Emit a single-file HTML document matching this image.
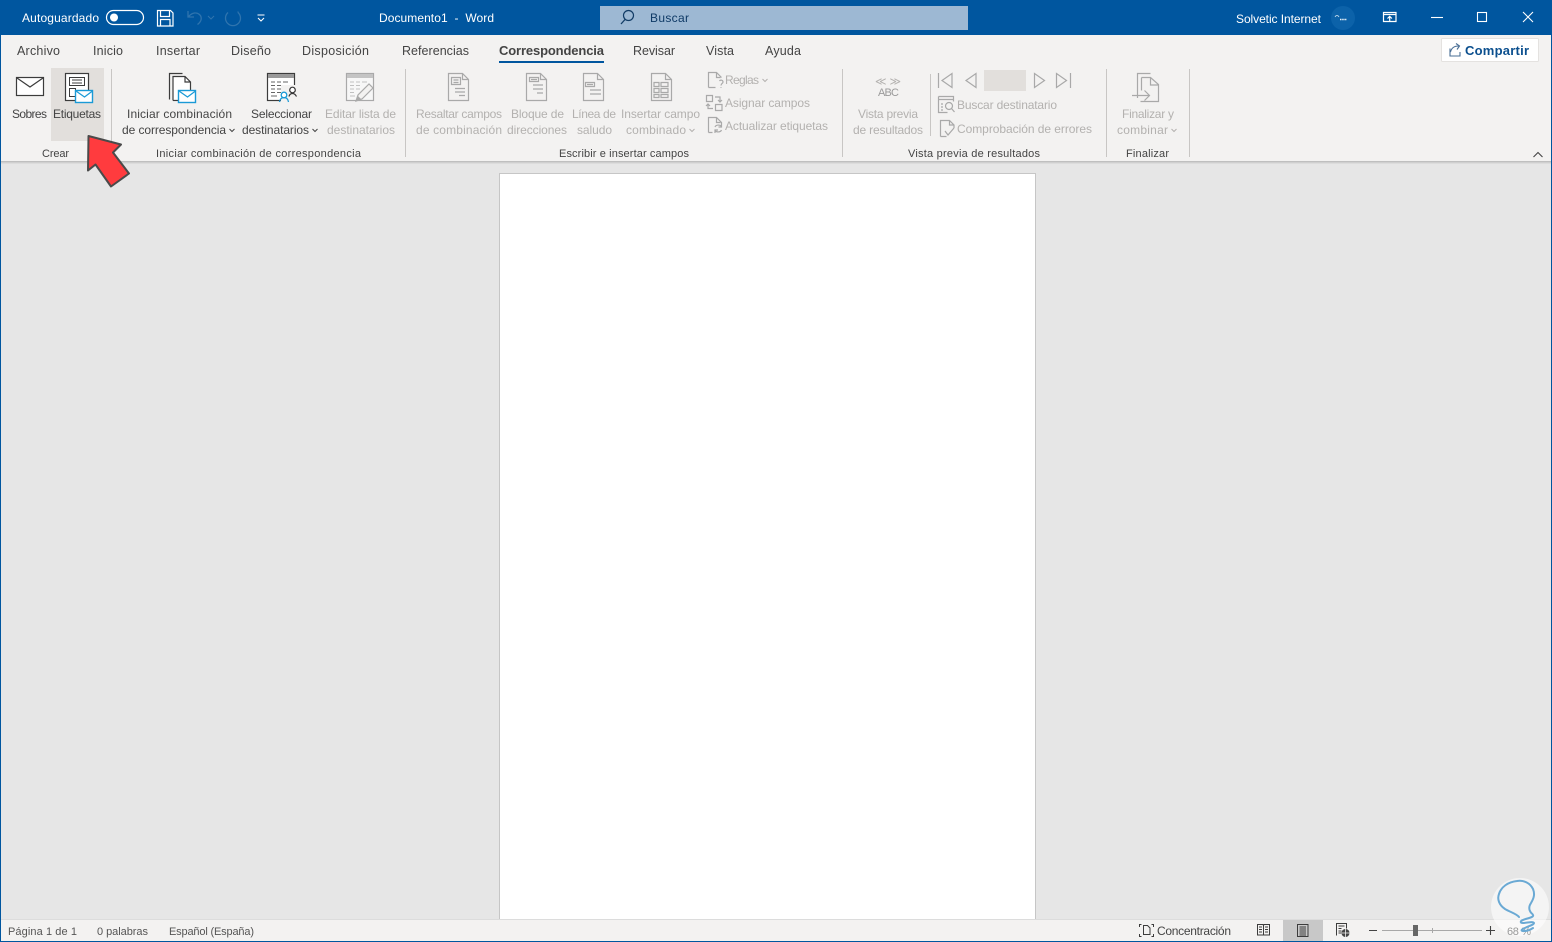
<!DOCTYPE html>
<html lang="es"><head><meta charset="utf-8"><title>Documento1 - Word</title>
<style>
html,body{margin:0;padding:0;background:#e6e6e6;overflow:hidden}
svg{display:block}
text{font-family:"Liberation Sans",sans-serif;font-size:12px;fill:#444;white-space:pre}
.w{fill:#fff}.d{fill:#b3b1af}.g{font-size:11px;fill:#444}.s{font-size:11px;fill:#555}.t{font-size:12.5px}
.ik{fill:none;stroke:#3c3c3c;stroke-width:1.2}
.ig{fill:none;stroke:#a9a9a9;stroke-width:1.2}
.ib{fill:#fff;stroke:#1a9ad6;stroke-width:1.4}
.iw{fill:none;stroke:#fff;stroke-width:1.2}
</style></head><body>
<svg xmlns="http://www.w3.org/2000/svg" width="1552" height="942" viewBox="0 0 1552 942">
<rect width="1552" height="942" fill="#e6e6e6"/>
<!-- title bar -->
<rect width="1552" height="35" fill="#00569f"/>
<text class="w" x="22" y="22" textLength="77">Autoguardado</text>
<rect x="106.500" y="10.500" width="37" height="14" rx="7" fill="none" stroke="#fff" stroke-width="1.200"/>
<circle cx="114" cy="17.500" r="4" fill="#fff"/>
<path class="iw" d="M157.500 10.500h13l2.500 2.500v13h-15.500zM160.500 10.500v6h9v-6M160.500 26v-6.500h9.500V26"/>
<g fill="none" stroke="#2f74ae" stroke-width="1.300"><path d="M188 11v6h6M188.500 16.500c4-4 8-4.500 11-2 3 3 2 7-2 10"/><path d="M208 16l3 3 3-3" stroke-width="1"/><path d="M228 12.500a7.500 7.500 0 1 0 10 0M238 12.500v-1"/></g>
<path d="M257.500 15h7M258 18l3 3 3-3" fill="none" stroke="#fff" stroke-width="1.100"/>
<text class="w" x="379" y="22" textLength="115">Documento1  -  Word</text>
<rect x="600" y="6" width="368" height="24" fill="#9db8d3"/>
<circle cx="628.500" cy="15.500" r="5" fill="none" stroke="#123c66" stroke-width="1.200"/><path d="M625 19.500l-4 4.500" stroke="#123c66" stroke-width="1.300"/>
<text x="650" y="22" textLength="39" style="fill:#0f3a66">Buscar</text>
<text class="w" x="1236" y="23" textLength="85">Solvetic Internet</text>
<circle cx="1343" cy="18" r="12" fill="#0c62a9"/>
<path d="M1335 17c1-2 3-2 4 0" stroke="#cfe2f1" stroke-width=".8" fill="none"/><path d="M1340 19.500h7" stroke="#e8f1f8" stroke-width="1.400" stroke-dasharray="1.500 .7"/>
<path class="iw" d="M1383.500 12.500h12.500v9h-12.500zM1383.500 14.500h12.500M1389.700 21v-4.500M1387.500 18.500l2.200-2.200 2.200 2.200"/>
<path d="M1431 17.500h12" stroke="#fff" stroke-width="1.100"/>
<rect x="1477.500" y="12.500" width="9" height="9" fill="none" stroke="#fff" stroke-width="1.100"/>
<path d="M1523 12l10 10M1533 12l-10 10" stroke="#fff" stroke-width="1.100"/>
<!-- ribbon -->
<rect y="35" width="1552" height="126" fill="#f3f2f1"/>
<rect y="161" width="1552" height="1" fill="#bfbfbf"/><rect y="162" width="1552" height="1" fill="#cfcfcf"/><rect y="163" width="1552" height="1" fill="#dcdcdc"/>
<text class="t" x="17" y="55" textLength="43">Archivo</text>
<text class="t" x="93" y="55" textLength="30">Inicio</text>
<text class="t" x="156" y="55" textLength="44">Insertar</text>
<text class="t" x="231" y="55" textLength="40">Diseño</text>
<text class="t" x="302" y="55" textLength="67">Disposición</text>
<text class="t" x="402" y="55" textLength="67">Referencias</text>
<text x="499" y="55" textLength="105" style="font-weight:700;font-size:13px">Correspondencia</text>
<rect x="499" y="61" width="105" height="2" fill="#00569f"/>
<text class="t" x="633" y="55" textLength="42">Revisar</text>
<text class="t" x="706" y="55" textLength="28">Vista</text>
<text class="t" x="765" y="55" textLength="36">Ayuda</text>
<!-- compartir -->
<rect x="1441.500" y="38.500" width="97" height="23" rx="1" fill="#fff" stroke="#e4e2e0"/>
<path d="M1450 48.500v7.500h10v-4M1450.500 52c1-4 4-6 8-6M1456 43.500l3.500 2.500-2.500 3.500" fill="none" stroke="#4a6f96" stroke-width="1.100"/>
<text x="1465" y="55" textLength="64" style="font-weight:700;fill:#0b4f8e;font-size:13px">Compartir</text>
<!-- highlight -->
<rect x="51" y="68" width="53" height="73" fill="#e2dfdc"/>
<!-- separators -->
<g fill="#c8c6c4"><rect x="111" y="69" width="1" height="88"/><rect x="405" y="69" width="1" height="88"/><rect x="842" y="69" width="1" height="88"/><rect x="1106" y="69" width="1" height="88"/><rect x="1189" y="69" width="1" height="88"/><rect x="930" y="74" width="1" height="62"/></g>
<!-- sobres -->
<rect x="16.500" y="77.500" width="27" height="18" fill="#fff" stroke="#3c3c3c" stroke-width="1.200"/>
<path d="M17 78l13 9 13-9" fill="none" stroke="#3c3c3c" stroke-width="1.200"/>
<!-- etiquetas -->
<rect x="65.500" y="73.500" width="23" height="27" fill="#fff" stroke="#3c3c3c" stroke-width="1.200"/>
<path d="M69.500 77.500h15v8h-15zM69.500 88.500h6v8h-6zM72 80h10M72 83h10" class="ik" style="stroke-width:1"/>
<rect x="75.500" y="90.500" width="17" height="12" class="ib"/><path d="M76 91l8.500 6 8-6" fill="none" stroke="#1a9ad6" stroke-width="1.200"/>
<text x="12" y="118" textLength="35">Sobres</text>
<text x="53" y="118" textLength="48">Etiquetas</text>
<text class="g" x="42" y="157" textLength="27">Crear</text>
<!-- iniciar -->
<path class="ik" d="M169.500 99.500v-26h13"/>
<path d="M173 76.500h12l5.500 5.500v20h-17.500z" fill="#fff"/><path class="ik" d="M173 100.500v-24h12l5.500 5.500v8M185 77v5h5M173 100.500h5"/>
<rect x="178.500" y="90.500" width="17" height="12" class="ib"/><path d="M179 91l8.500 6 8-6" fill="none" stroke="#1a9ad6" stroke-width="1.200"/>
<text x="127" y="118" textLength="105">Iniciar combinación</text>
<text x="122" y="134" textLength="104">de correspondencia</text>
<path d="M229.500 129l2.500 2.500 2.500-2.500" fill="none" stroke="#444"/>
<!-- seleccionar -->
<rect x="267.500" y="73.500" width="27" height="27" fill="#fff" stroke="#3c3c3c" stroke-width="1.200"/>
<rect x="268" y="74" width="26" height="4" fill="#9a9a9a"/>
<path d="M271 82h4M277 82h4M283 82h5M271 85.500h4M277 85.500h4M283 85.500h5M271 89h4M277 89h4M271 92.500h4M277 92.500h4M271 96h6" stroke="#666"/>
<rect x="281" y="85" width="16" height="17" fill="#f3f2f1"/>
<circle cx="284" cy="95" r="2.800" fill="#fff" stroke="#1a9ad6" stroke-width="1.300"/><path d="M279.500 102c.5-3 2-4.500 4.500-4.500s4 1.500 4.500 4.500" fill="none" stroke="#1a9ad6" stroke-width="1.300"/>
<circle cx="292.500" cy="90" r="2.800" fill="#fff" stroke="#333" stroke-width="1.200"/><path d="M289 96.500c.5-2 2-3 3.500-3s3 1 4 3" fill="none" stroke="#333" stroke-width="1.200"/>
<text x="251" y="118" textLength="61">Seleccionar</text>
<text x="242" y="134" textLength="67">destinatarios</text>
<path d="M312.500 129l2.500 2.500 2.500-2.500" fill="none" stroke="#444"/>
<!-- editar -->
<rect x="346.500" y="73.500" width="27" height="27" fill="#f7f7f7" stroke="#a9a9a9" stroke-width="1.200"/>
<rect x="347" y="74" width="26" height="4" fill="#c4c4c4"/>
<path d="M350 82h4M356 82h4M362 82h5M350 85.500h4M356 85.500h4M350 89h4M356 89h4M350 92.500h4M350 96h5" stroke="#c0c0c0"/>
<path d="M356 101l2-6 11-11 4 4-11 11z" fill="#f3f2f1" stroke="#aaa" stroke-width="1.200"/><path d="M356 101l2-5 3 3z" fill="#aaa"/>
<text class="d" x="325" y="118" textLength="71">Editar lista de</text>
<text class="d" x="327" y="134" textLength="68">destinatarios</text>
<text class="g" x="156" y="157" textLength="205">Iniciar combinación de correspondencia</text>
<!-- write group -->
<g class="ig">
<path d="M448.500 100.500v-27h14l6 6v21zM462.500 74v5.500h6M451.500 77.500h9v7h-9zM453.500 80h5M453.500 82.500h5M455 88.500h10M455 92h10M459 95.500h6" class="ig"/>
<path d="M526.500 100.500v-27h14l6 6v21zM540.500 74v5.500h6M529.500 77.500h9v4h-9zM531 79.500h6M533 85h10M533 89h10M537 93h6" class="ig"/>
<path d="M583.500 100.500v-27h14l6 6v21zM597.500 74v5.500h6M585.500 82.500h9v4h-9zM587 84.500h6M590 90h11M590 94h11" class="ig"/>
<path d="M651.500 100.500v-27h14l6 6v21zM665.500 74v5.500h6M654 82.500h5v4h-5zM661 82.500h7v4h-7zM654 88.500h5v4h-5zM661 88.500h7v4h-7zM654 94.500h5v3h-5zM661 94.500h7v3h-7z" class="ig"/>
<path d="M708.500 87.500v-15h8l5 5M716.500 73v4.500h4M708.500 87.500h7M719.500 81c1-1.500 3.500-1 3.500 1 0 1.500-2 1.500-2 3.500M721 87v.8" class="ig"/>
<path d="M706.500 95.500h6v6h-6zM715.500 104.500h6.500v6h-6.500zM715 97h5v5M718 100l2 2 2-2M713 108.500h-5v-4M706 106l2-2 2 2" class="ig"/>
<path d="M708.500 132.500v-15h8l5 5v2M716.500 118v4.500h4M708.500 132.500h4M715 127c1-2.500 5-2.500 6.500-.5M721.500 124v3h-3M721.500 130c-1 2.500-5 2.500-6.500.5M715 133v-3h3" class="ig"/>
</g>
<text class="d" x="416" y="118" textLength="86">Resaltar campos</text>
<text class="d" x="416" y="134" textLength="86">de combinación</text>
<text class="d" x="511" y="118" textLength="53">Bloque de</text>
<text class="d" x="507" y="134" textLength="60">direcciones</text>
<text class="d" x="572" y="118" textLength="44">Línea de</text>
<text class="d" x="577" y="134" textLength="35">saludo</text>
<text class="d" x="621" y="118" textLength="79">Insertar campo</text>
<text class="d" x="626" y="134" textLength="60">combinado</text>
<path d="M689.500 129l2.500 2.500 2.500-2.500" fill="none" stroke="#b3b1af"/>
<text class="d" x="725" y="84" textLength="34">Reglas</text>
<path d="M762.500 79l2.500 2.500 2.500-2.500" fill="none" stroke="#b3b1af"/>
<text class="d" x="725" y="107" textLength="85">Asignar campos</text>
<text class="d" x="725" y="130" textLength="103">Actualizar etiquetas</text>
<text class="g" x="559" y="157" textLength="130">Escribir e insertar campos</text>
<!-- preview -->
<text x="875" y="85" textLength="26" style="font-size:11px;fill:#b3b1af">≪ ≫</text>
<text x="878" y="96" textLength="21" style="font-size:11px;fill:#9a9a9a">ABC</text>
<text class="d" x="858" y="118" textLength="60">Vista previa</text>
<text class="d" x="853" y="134" textLength="70">de resultados</text>
<path class="ig" d="M938.500 73v15M952 73.500v14l-10-7zM976 73.500v14l-10-7zM1034.500 73.500v14l10-7zM1056.500 73.500v14l10-7zM1070.500 73v15"/>
<rect x="984" y="70" width="42" height="21" fill="#e2dfdc"/>
<path class="ig" d="M938.500 96.500h15v5M938.500 99.500h15M938.500 96.500v16h9M941 104h2M941 107h2M941 110h2"/>
<circle cx="949" cy="106" r="3.500" class="ig"/><path class="ig" d="M951.500 108.500l3 3.500"/>
<text class="d" x="957" y="109" textLength="100">Buscar destinatario</text>
<path class="ig" d="M940.500 136.500v-16h9l4.500 4.500v3M949.500 121v4h4M940.500 136.500h6M945 131l3 4 6-7"/>
<text class="d" x="957" y="133" textLength="135">Comprobación de errores</text>
<text class="g" x="908" y="157" textLength="132">Vista previa de resultados</text>
<!-- finalizar -->
<path class="ig" d="M1137.500 98v-24.500h13M1141.500 77.500h9l8 7v17h-18M1150.500 78v7h7.500M1141.500 77.500v13M1132 95.500h17M1144.500 90.500l5 5-5 5"/>
<text class="d" x="1122" y="118" textLength="52">Finalizar y</text>
<text class="d" x="1117" y="134" textLength="51">combinar</text>
<path d="M1171.500 129l2.500 2.500 2.500-2.500" fill="none" stroke="#b3b1af"/>
<text class="g" x="1126" y="157" textLength="43">Finalizar</text>
<path d="M1533.500 157l4.500-4.500 4.500 4.500" fill="none" stroke="#444" stroke-width="1.100"/>
<!-- page -->
<rect x="499.500" y="173.500" width="536" height="746" fill="#fff" stroke="#c6c6c6"/>
<!-- status -->
<rect y="919" width="1552" height="23" fill="#f3f2f1"/><rect y="919" width="1552" height="1" fill="#dcdcdc"/>
<text class="s" x="8" y="935" textLength="69">Página 1 de 1</text>
<text class="s" x="97" y="935" textLength="51">0 palabras</text>
<text class="s" x="169" y="935" textLength="85">Español (España)</text>
<path d="M1139.500 927v-2.500h2M1139.500 934v2.500h2M1153.500 927v-2.500h-2M1153.500 934v2.500h-2M1143.500 934.500v-9h4l2.500 2.500v6.500z" class="ik" style="stroke-width:1"/>
<text x="1157" y="935" textLength="74">Concentración</text>
<path class="ik" style="stroke-width:1" d="M1257.500 924.500h5.500l.5 1 .5-1h5.500v10.500h-12zM1263.500 925.500v9.500M1259 927h3M1259 929.500h3M1259 932h3M1265 927h3M1265 929.500h3M1265 932h3"/>
<rect x="1283" y="920" width="40" height="22" fill="#c8c8c8"/>
<path class="ik" style="stroke-width:1" d="M1297.500 924.500h10.500v12h-10.500zM1299.500 927h6.500M1299.500 929h6.500M1299.500 931h6.500M1299.500 933h6.500M1299.500 935h6.500"/>
<path class="ik" style="stroke-width:1" d="M1336.500 935.500v-12h10v5M1338.500 926h6M1338.500 928.500h3M1338.500 931h3M1338.500 933h3"/>
<circle cx="1345.500" cy="933" r="4" fill="#444"/><path d="M1341.500 933h8M1345.500 929v8" stroke="#f3f2f1" stroke-width=".8"/>
<path d="M1369 930.500h8M1486 930.500h9M1490.500 926v9" stroke="#444" stroke-width="1.100"/>
<rect x="1382" y="930" width="100" height="1" fill="#a8a8a8"/><rect x="1432" y="928" width="1" height="5" fill="#a8a8a8"/>
<rect x="1413" y="925" width="5" height="11" fill="#666"/>
<!-- watermark -->
<circle cx="1520" cy="907" r="29" fill="#fff" fill-opacity=".55"/>
<text x="1507" y="935" textLength="24" class="s" style="fill:#9a9a9a">68 %</text>
<path d="M1519 917c-2-3-9-5-14-8-6-4-8-10-6-15 2-7 9-12 18-13 7-1 13 2 16 8 2 5 1 9-2 14-2 3-2 6-1 8 1 3 4 3 3 5-1 2-6 2-10 4-3 1-3 3 0 3 4 0 10-2 11 0 0 2-6 3-11 6-2 1-2 2 1 2 3 0 6-1 9-3" fill="none" stroke="#6aa9d4" stroke-width="2" stroke-linecap="round" stroke-linejoin="round"/>
<!-- arrow -->
<path d="M88.500 136l32.500 8.500-8 8 16 21-18 13-15.500-22-7.500 6z" fill="#ff3b3e" stroke="#4a4a4a" stroke-width="2" stroke-linejoin="round"/>
<!-- window border -->
<rect x="0" y="35" width="1" height="907" fill="#00569f"/><rect x="1551" y="35" width="1" height="907" fill="#00569f"/><rect x="0" y="941" width="1552" height="1" fill="#00569f"/>
</svg>
</body></html>
